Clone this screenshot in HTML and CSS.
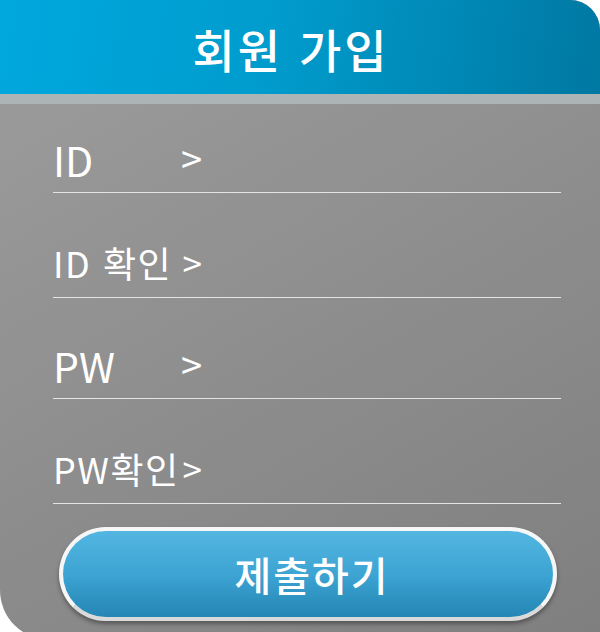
FILE: index.html
```html
<!DOCTYPE html>
<html lang="ko">
<head>
<meta charset="utf-8">
<title>회원 가입</title>
<link rel="stylesheet" href="styles.css">
</head>
<body>
<div class="card">
  <header class="head">
    <h1 class="title">회원 가입</h1>
  </header>
  <div class="stripe"></div>
  <form class="form">
    <div class="field big f1"><span class="label"><span>ID</span><span class="arrow">&gt;</span></span></div>
    <div class="field small f2"><span class="label"><span>ID 확인</span><span class="arrow">&gt;</span></span></div>
    <div class="field big f3"><span class="label"><span>PW</span><span class="arrow">&gt;</span></span></div>
    <div class="field small f4"><span class="label"><span>PW확인</span><span class="arrow">&gt;</span></span></div>
    <div class="btn-wrap">
      <button type="button" class="submit">제출하기</button>
    </div>
  </form>
</div>
</body>
</html>
```
FILE: styles.css
```css
html, body {
  margin: 0;
  padding: 0;
  overflow: hidden;
  background: #ffffff;
}
body {
  font-family: "Noto Sans CJK KR", "Noto Sans", sans-serif;
}
.card {
  width: 600px;
  height: 640px;
  border-top-right-radius: 30px;
  border-bottom-left-radius: 50px;
  overflow: hidden;
  background: linear-gradient(150deg, #9d9d9d 0%, #8e8e8e 50%, #7f7f7f 100%);
  display: flex;
  flex-direction: column;
}
.head {
  height: 94px;
  background: linear-gradient(100deg, #00a8de 0%, #009ccd 45%, #0078a2 100%);
  display: flex;
  align-items: center;
  justify-content: center;
}
.title {
  margin: 0;
  color: #ffffff;
  font-size: 46px;
  font-weight: 500;
  line-height: 1;
  letter-spacing: 3px;
  padding-left: 0;
  margin-right: 18px;
  margin-top: 2px;
}
.stripe {
  height: 10px;
  background: #adb4b5;
}
.form {
  margin: 0;
  padding: 0 39px 0 53px;
  display: flex;
  flex-direction: column;
}
.field {
  display: flex;
  align-items: flex-end;
  border-bottom: 1px solid #e4e4e4;
  color: #ffffff;
  line-height: 1;
  box-sizing: border-box;
}
.big { font-size: 41px; padding-bottom: 12px; }
.small { font-size: 36px; padding-bottom: 17px; letter-spacing: 1.5px; }
.f1 { height: 89px; }
.f2 { height: 105px; }
.f3 { height: 101px; }
.f4 { height: 105px; }
.label {
  width: 149px;
  display: flex;
  justify-content: space-between;
  white-space: nowrap;
}
.arrow {
  font-weight: 400;
  letter-spacing: 0;
}
.big .arrow { font-size: 38px; }
.small .arrow { font-size: 35px; }
.btn-wrap {
  padding-top: 23px;
  padding-left: 6px;
  padding-right: 4px;
}
.submit {
  width: 498px;
  height: 94px;
  border-radius: 47px;
  border: 4px solid #f6f6f6;
  border-bottom-color: #dadada;
  background: linear-gradient(180deg, #53b6e1 0%, #3da4d3 50%, #2486b4 100%);
  box-shadow: 0 3px 4px rgba(0, 0, 0, 0.35);
  color: #ffffff;
  font-family: "Noto Sans CJK KR", "Noto Sans", sans-serif;
  font-size: 40px;
  font-weight: 500;
  letter-spacing: 2px;
  line-height: 1;
  padding: 0 0 0 8px;
  margin: 0;
  box-sizing: border-box;
}
```
